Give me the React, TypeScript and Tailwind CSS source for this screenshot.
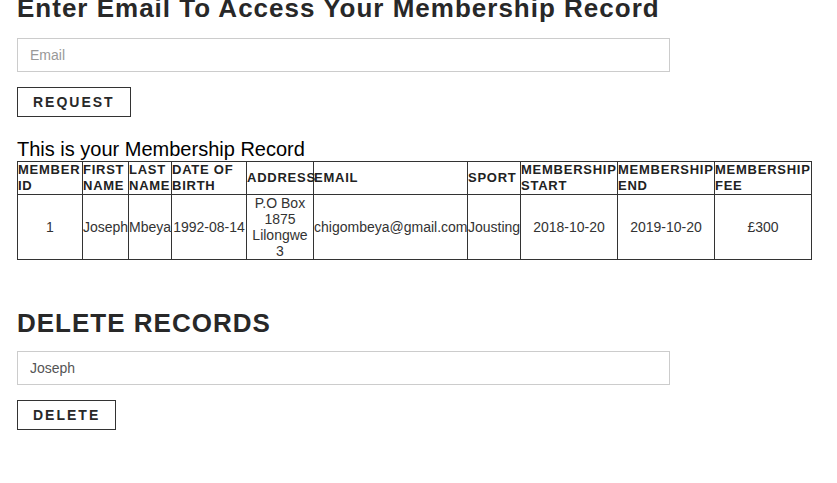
import React from "react";

const headers = [
  ["MEMBER", "ID"],
  ["FIRST", "NAME"],
  ["LAST", "NAME"],
  ["DATE OF", "BIRTH"],
  ["ADDRESS"],
  ["EMAIL"],
  ["SPORT"],
  ["MEMBERSHIP", "START"],
  ["MEMBERSHIP", "END"],
  ["MEMBERSHIP", "FEE"],
];

export default function App() {
  return (
    <div className="min-h-[483px] bg-white px-[17px] font-['Liberation_Sans',Arial,sans-serif] text-[#333]">
      <h1 className="-mt-[7px] text-[26px] leading-[30px] font-bold tracking-[1px] text-[#282828] whitespace-nowrap">
        Enter Email To Access Your Membership Record
      </h1>
      <input
        className="mt-[15px] block w-[653px] h-[34px] border border-[#ccc] px-[12px] text-[14px] text-[#555] placeholder:text-[#999] outline-none"
        placeholder="Email"
      />
      <button className="mt-[15px] block h-[30px] px-[15px] border border-[#333] bg-white text-[14px] leading-[16px] font-bold tracking-[2px] text-[#282828]">
        REQUEST
      </button>
      <p className="mt-[21px] text-[20px] leading-[23px] text-black">This is your Membership Record</p>
      <table className="table-fixed border-collapse w-[795px] border border-[#333]">
        <colgroup>
          <col className="w-[65px]" />
          <col className="w-[46px]" />
          <col className="w-[43px]" />
          <col className="w-[75px]" />
          <col className="w-[67px]" />
          <col className="w-[154px]" />
          <col className="w-[53px]" />
          <col className="w-[97px]" />
          <col className="w-[97px]" />
          <col className="w-[97px]" />
        </colgroup>
        <thead>
          <tr>
            {headers.map((h, i) => (
              <th
                key={i}
                className="border border-[#333] p-0 text-left align-middle text-[13px] leading-[16px] font-bold tracking-[0.75px] text-[#222] whitespace-nowrap overflow-visible"
              >
                {h.map((line, j) => (
                  <div key={j}>{line}</div>
                ))}
              </th>
            ))}
          </tr>
        </thead>
        <tbody>
          <tr className="text-[14px] leading-[16px] text-[#333]">
            <td className="border border-[#333] p-0 text-center align-middle">1</td>
            <td className="border border-[#333] p-0 text-center align-middle">Joseph</td>
            <td className="border border-[#333] p-0 text-center align-middle">Mbeya</td>
            <td className="border border-[#333] p-0 text-center align-middle">1992-08-14</td>
            <td className="border border-[#333] p-0 text-center align-middle">
              <div>P.O Box</div>
              <div>1875</div>
              <div>Lilongwe</div>
              <div>3</div>
            </td>
            <td className="border border-[#333] p-0 text-center align-middle">chigombeya@gmail.com</td>
            <td className="border border-[#333] p-0 text-center align-middle">Jousting</td>
            <td className="border border-[#333] p-0 text-center align-middle">2018-10-20</td>
            <td className="border border-[#333] p-0 text-center align-middle">2019-10-20</td>
            <td className="border border-[#333] p-0 text-center align-middle">£300</td>
          </tr>
        </tbody>
      </table>
      <h2 className="mt-[48px] text-[26px] leading-[30px] font-bold tracking-[1px] text-[#282828]">DELETE RECORDS</h2>
      <input
        className="mt-[13px] block w-[653px] h-[34px] border border-[#ccc] px-[12px] text-[14px] text-[#555] placeholder:text-[#999] outline-none"
        defaultValue="Joseph"
      />
      <button className="mt-[15px] block h-[30px] px-[15px] border border-[#333] bg-white text-[14px] leading-[16px] font-bold tracking-[2px] text-[#282828]">
        DELETE
      </button>
    </div>
  );
}
